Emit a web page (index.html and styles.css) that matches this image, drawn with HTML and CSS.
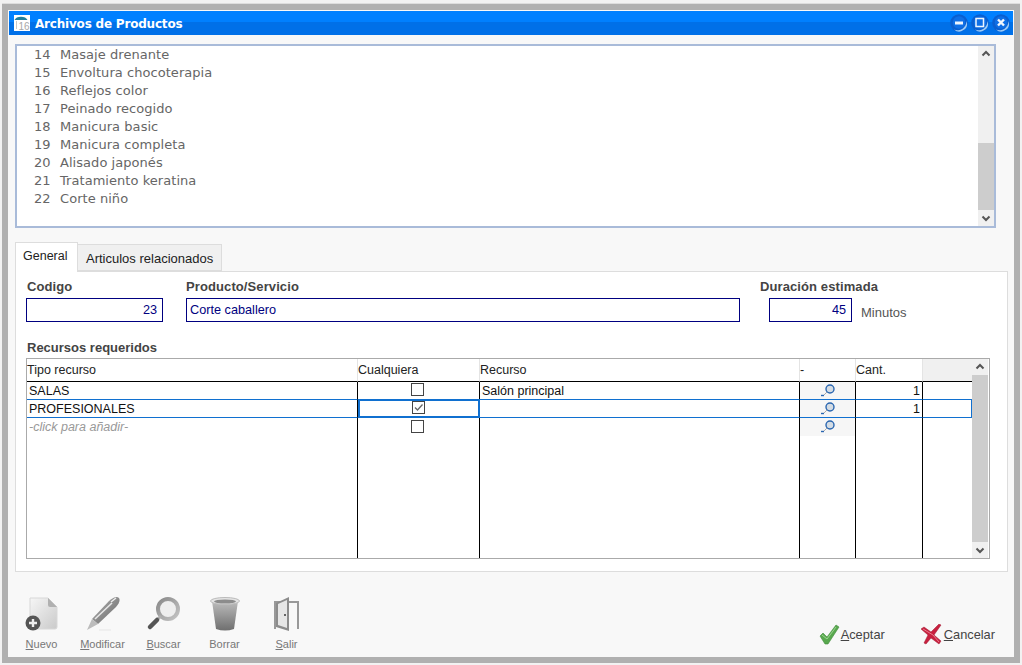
FILE: index.html
```html
<!DOCTYPE html>
<html lang="es">
<head>
    <meta charset="UTF-8">
    <title>Archivos de Productos</title>
    <link rel="stylesheet" href="styles.css">
</head>
<body>
    <div class="window">
        <div class="titlebar">
            <svg class="app-icon" width="16" height="16" viewBox="0 0 16 16">
                <rect width="16" height="16" fill="#fff"/>
                <path d="M0.5 5 C2 0.5 12 0.5 13.5 5 Z" fill="#1f7f9c"/>
                <path d="M2.5 6 V14" stroke="#c8c8c8" stroke-width="1"/>
                <text x="4.5" y="15" class="app-icon-text">16</text>
            </svg>
            <span class="title">Archivos de Productos</span>
            <div class="win-buttons">
                <svg width="18" height="18" viewBox="0 0 18 18">
                    <circle cx="9" cy="9" r="8.8" fill="#0a5fd0"/>
                    <path d="M16.5 7 A7.8 7.8 0 0 1 4 15.5 A9 9 0 0 0 16.5 7 Z" fill="#9ccbf7"/>
                    <circle cx="9" cy="8.5" r="6.2" fill="#0f6fe6"/>
                    <rect x="5" y="7.5" width="8" height="3" fill="#eef5fd"/>
                </svg>
                <svg width="18" height="18" viewBox="0 0 18 18">
                    <circle cx="9" cy="9" r="8.8" fill="#0a5fd0"/>
                    <path d="M16.5 7 A7.8 7.8 0 0 1 4 15.5 A9 9 0 0 0 16.5 7 Z" fill="#9ccbf7"/>
                    <circle cx="9" cy="8.5" r="6.2" fill="#0f6fe6"/>
                    <rect x="5" y="4.5" width="7.5" height="8" fill="none" stroke="#eef5fd" stroke-width="1.5"/>
                </svg>
                <svg width="18" height="18" viewBox="0 0 18 18">
                    <circle cx="9" cy="9" r="8.8" fill="#0a5fd0"/>
                    <path d="M16.5 7 A7.8 7.8 0 0 1 4 15.5 A9 9 0 0 0 16.5 7 Z" fill="#9ccbf7"/>
                    <circle cx="9" cy="8.5" r="6.2" fill="#0f6fe6"/>
                    <path d="M6 5.5 L12 11.5 M12 5.5 L6 11.5" stroke="#f2f7fd" stroke-width="2.4"/>
                </svg>
            </div>
        </div>

        <div class="content">
            <div class="listbox">
                <ul class="items">
                    <li><span class="num">14</span>Masaje drenante</li>
                    <li><span class="num">15</span>Envoltura chocoterapia</li>
                    <li><span class="num">16</span>Reflejos color</li>
                    <li><span class="num">17</span>Peinado recogido</li>
                    <li><span class="num">18</span>Manicura basic</li>
                    <li><span class="num">19</span>Manicura completa</li>
                    <li><span class="num">20</span>Alisado japonés</li>
                    <li><span class="num">21</span>Tratamiento keratina</li>
                    <li><span class="num">22</span>Corte niño</li>
                </ul>
                <div class="scrollbar">
                    <svg class="arrow" width="16" height="16" viewBox="0 0 16 16"><path d="M4.5 9.5 L8 6 L11.5 9.5" fill="none" stroke="#555" stroke-width="2"/></svg>
                    <div class="track list-track"><div class="thumb list-thumb"></div></div>
                    <svg class="arrow" width="16" height="16" viewBox="0 0 16 16"><path d="M4.5 6.5 L8 10 L11.5 6.5" fill="none" stroke="#555" stroke-width="2"/></svg>
                </div>
            </div>

            <div class="tabs">
                <div class="tab active">General</div>
                <div class="tab">Articulos relacionados</div>
            </div>

            <div class="panel">
                <div class="fields">
                    <div class="field codigo">
                        <label>Codigo</label>
                        <div class="input num-input">23</div>
                    </div>
                    <div class="field producto">
                        <label>Producto/Servicio</label>
                        <div class="input">Corte caballero</div>
                    </div>
                    <div class="field duracion">
                        <label>Duración estimada</label>
                        <div class="duracion-row">
                            <div class="input num-input">45</div>
                            <span class="minutos">Minutos</span>
                        </div>
                    </div>
                </div>

                <div class="grid-label">Recursos requeridos</div>
                <div class="grid">
                    <table class="recursos">
                        <colgroup>
                            <col class="c1"><col class="c2"><col class="c3"><col class="c4"><col class="c5"><col class="c6">
                        </colgroup>
                        <thead>
                            <tr>
                                <th>Tipo recurso</th>
                                <th>Cualquiera</th>
                                <th>Recurso</th>
                                <th>-</th>
                                <th>Cant.</th>
                                <th class="head-empty"></th>
                            </tr>
                        </thead>
                        <tbody>
                            <tr class="row-first">
                                <td class="text">SALAS</td>
                                <td class="center"><span class="check"></span></td>
                                <td class="text">Salón principal</td>
                                <td class="lookup"><svg width="16" height="14" viewBox="0 0 16 14"><use href="#lupa"/></svg></td>
                                <td class="qty">1</td>
                                <td></td>
                            </tr>
                            <tr class="row-selected">
                                <td class="text">PROFESIONALES</td>
                                <td class="center current"><span class="check"><svg width="11" height="11" viewBox="0 0 11 11"><path d="M2 5.5 L4.5 8 L9.5 2.5" fill="none" stroke="#666" stroke-width="1.3"/></svg></span></td>
                                <td class="text"></td>
                                <td class="lookup"><svg width="16" height="14" viewBox="0 0 16 14"><use href="#lupa"/></svg></td>
                                <td class="qty">1</td>
                                <td class="last"></td>
                            </tr>
                            <tr class="row-new">
                                <td class="hint">-click para añadir-</td>
                                <td class="center"><span class="check"></span></td>
                                <td></td>
                                <td class="lookup"><svg width="16" height="14" viewBox="0 0 16 14"><use href="#lupa"/></svg></td>
                                <td></td>
                                <td></td>
                            </tr>
                            <tr class="row-fill">
                                <td></td><td></td><td></td><td></td><td></td><td></td>
                            </tr>
                        </tbody>
                    </table>
                    <div class="scrollbar grid-scroll">
                        <svg class="arrow" width="16" height="16" viewBox="0 0 16 16"><path d="M4.5 9.5 L8 6 L11.5 9.5" fill="none" stroke="#555" stroke-width="2"/></svg>
                        <div class="track"><div class="thumb grid-thumb"></div></div>
                        <svg class="arrow" width="16" height="16" viewBox="0 0 16 16"><path d="M4.5 6.5 L8 10 L11.5 6.5" fill="none" stroke="#555" stroke-width="2"/></svg>
                    </div>
                </div>
            </div>

            <div class="footer">
                <div class="tools">
                    <div class="tool">
                        <svg width="36" height="36" viewBox="0 0 36 36">
                            <defs>
                                <linearGradient id="docg" x1="0" y1="0" x2="1" y2="1"><stop offset="0" stop-color="#f6f6f6"/><stop offset="1" stop-color="#cacaca"/></linearGradient>
                                <linearGradient id="bucketg" x1="0" y1="0" x2="0" y2="1"><stop offset="0" stop-color="#bdbdbd"/><stop offset="1" stop-color="#6f6f6f"/></linearGradient>
                                <linearGradient id="peng" x1="0" y1="0" x2="1" y2="1"><stop offset="0" stop-color="#b4b4b4"/><stop offset="1" stop-color="#666"/></linearGradient>
                                <linearGradient id="lensg" x1="0" y1="0" x2="1" y2="1"><stop offset="0" stop-color="#8a8a8a"/><stop offset="1" stop-color="#c4c4c4"/></linearGradient>
                            </defs>
                            <path d="M6 2 H24 L33 11 V31 Q33 33 31 33 H8 Q6 33 6 31 Z" fill="url(#docg)" stroke="#d8d8d8"/>
                            <path d="M24 2 L33 11 H26 Q24 11 24 9 Z" fill="#b0b0b0"/>
                            <circle cx="9" cy="27" r="7.5" fill="#555"/>
                            <path d="M9 23 V31 M5 27 H13" stroke="#eee" stroke-width="2.4"/>
                        </svg>
                        <span class="tool-label"><u>N</u>uevo</span>
                    </div>
                    <div class="tool">
                        <svg width="36" height="36" viewBox="0 0 36 36">
                            <path d="M24 5 Q31 -1 34 2 Q36 5 31 11 L13 28 L7 23 Z" fill="url(#peng)"/>
                            <path d="M26 6 L31 2" stroke="#eee" stroke-width="1.5"/>
                            <path d="M7 23 L13 28 L2 34 Z" fill="#bcbcbc"/>
                            <path d="M10 23 L27 7" stroke="#e8e8e8" stroke-width="1.6"/>
                            <path d="M14 34 H26" stroke="#e6e6e6" stroke-width="1"/>
                        </svg>
                        <span class="tool-label"><u>M</u>odificar</span>
                    </div>
                    <div class="tool">
                        <svg width="36" height="36" viewBox="0 0 36 36">
                            <circle cx="22" cy="13" r="10" fill="#eee" stroke="url(#lensg)" stroke-width="4"/>
                            <path d="M15 20 L11 24" stroke="#b0b0b0" stroke-width="3"/>
                            <path d="M11 24 L4 31" stroke="#555" stroke-width="4.5" stroke-linecap="round"/>
                        </svg>
                        <span class="tool-label"><u>B</u>uscar</span>
                    </div>
                    <div class="tool">
                        <svg width="36" height="36" viewBox="0 0 36 36">
                            <path d="M5 5 L9 33 Q18 36 27 33 L31 5 Z" fill="url(#bucketg)"/>
                            <ellipse cx="18" cy="5" rx="14.5" ry="3.5" fill="#e4e4e4" stroke="#bbb"/>
                            <ellipse cx="18" cy="5.5" rx="11" ry="2" fill="#8c8c8c"/>
                        </svg>
                        <span class="tool-label">Borrar</span>
                    </div>
                    <div class="tool">
                        <svg width="36" height="36" viewBox="0 0 36 36">
                            <path d="M5 33 V5 H30 V33 H28 V7 H7 V33 Z" fill="#999"/>
                            <path d="M7 7 L20 1 V35 L7 31 Z" fill="#8c8c8c"/>
                            <path d="M9 8 L18 4 V32 L9 29 Z" fill="#e6e6e6"/>
                            <rect x="15" y="18" width="2" height="2" fill="#666"/>
                        </svg>
                        <span class="tool-label"><u>S</u>alir</span>
                    </div>
                </div>
                <div class="actions">
                    <div class="action">
                        <svg width="21" height="21" viewBox="0 0 21 21">
                            <path d="M1 12 L4 9 L8 13 L17 1 L20 3 L9 20 L6 20 Z" fill="#58a84e" stroke="#3f8a3a" stroke-width="0.6"/>
                            <path d="M3 11 L8 15 L17 3" fill="none" stroke="#9ad48f" stroke-width="1"/>
                        </svg>
                        <span><u>A</u>ceptar</span>
                    </div>
                    <div class="action">
                        <svg width="22" height="21" viewBox="0 0 22 21">
                            <path d="M0 5 L3 3 L10 8 L18 0 L20 1 L13 11 L20 17 L18 20 L10 14 L5 20 L3 19 L7 11 Z" fill="#c8203f" stroke="#a01830" stroke-width="0.5"/>
                            <path d="M2 5 L12 11 L18 18" fill="none" stroke="#ea7c8c" stroke-width="1"/>
                        </svg>
                        <span><u>C</u>ancelar</span>
                    </div>
                </div>
            </div>
        </div>
    </div>

    <svg class="defs" width="0" height="0">
        <symbol id="lupa" viewBox="0 0 16 14">
            <circle cx="10" cy="6" r="4" fill="#d4dce4" stroke="#2a66b0" stroke-width="1.4"/>
            <path d="M1 12.5 L4 12.5" stroke="#2a66b0" stroke-width="1.4"/>
            <path d="M4 12 L7 9" stroke="#aaa" stroke-width="1"/>
        </symbol>
    </svg>
</body>
</html>
```

FILE: styles.css
```css
html, body {
    margin: 0;
    padding: 0;
    height: 100%;
    background-color: #f2f2f2;
    overflow: hidden;
}
body {
    font-family: "Liberation Sans", Arial, sans-serif;
    font-size: 12px;
}
.window {
    box-sizing: border-box;
    width: 1018px;
    height: 659px;
    margin: 4px 0 0 2px;
    border: 6px solid #b0b0b0;
    padding: 1px 1px 0 1px;
    background-color: #f8f8f8;
    display: flex;
    flex-direction: column;
    box-shadow: 0 -1px 0 #ddd;
}
.titlebar {
    height: 24px;
    flex: none;
    display: flex;
    align-items: center;
    padding-left: 5px;
    background: linear-gradient(#0080ff 0, #0080ff 45%, #0070e8 45%, #0070e8 100%);
    color: white;
}
.app-icon {
    margin-right: 5px;
}
.app-icon-text {
    font-family: "Liberation Sans", sans-serif;
    font-size: 10px;
    fill: #a8a8a8;
}
.title {
    font-family: "DejaVu Sans", Verdana, sans-serif;
    font-weight: bold;
    font-size: 12px;
    letter-spacing: -0.2px;
    padding-top: 1px;
}
.win-buttons {
    margin-left: auto;
    margin-right: 3px;
    display: flex;
    gap: 3px;
}
.content {
    flex: 1;
    display: flex;
    flex-direction: column;
    padding: 9px 0 0 6px;
}
.listbox {
    box-sizing: border-box;
    width: 981px;
    height: 184px;
    flex: none;
    border: 2px solid #a9bbd9;
    background-color: white;
    display: flex;
}
.items {
    flex: 1;
    list-style: none;
    margin: 0;
    padding: 0;
    font-family: "DejaVu Sans", Verdana, sans-serif;
    font-size: 13px;
    letter-spacing: 0.05px;
    color: #666;
}
.items li {
    height: 18px;
    line-height: 18px;
    display: flex;
}
.num {
    width: 26px;
    margin-left: 17px;
}
.scrollbar {
    width: 16px;
    flex: none;
    display: flex;
    flex-direction: column;
    background-color: #f0f0f0;
}
.arrow {
    flex: none;
    display: block;
}
.track {
    flex: 1;
    display: flex;
    flex-direction: column;
}
.thumb {
    background-color: #cdcdcd;
}
.list-track {
    padding-top: 81px;
}
.list-thumb {
    height: 67px;
}
.grid-thumb {
    flex: 1;
}
.tabs {
    display: flex;
    align-items: flex-end;
    height: 29px;
    margin-top: 14px;
    flex: none;
}
.tab {
    box-sizing: border-box;
    height: 27px;
    line-height: 27px;
    padding: 0 8px;
    width: 144px;
    background-color: #f0f0f0;
    border: 1px solid #ddd;
    border-left: none;
    color: #222;
    font-size: 13px;
    white-space: nowrap;
}
.tab.active {
    width: 63px;
    height: 30px;
    line-height: 26px;
    padding: 0 7px;
    font-size: 12.5px;
    background-color: white;
    border-left: 1px solid #ddd;
    border-bottom: none;
    margin-bottom: -1px;
    position: relative;
    z-index: 1;
}
.panel {
    box-sizing: border-box;
    width: 993px;
    height: 301px;
    flex: none;
    background-color: white;
    border: 1px solid #ddd;
    padding: 7px 17px 0 10px;
}
.fields {
    display: flex;
}
.field label {
    display: block;
    height: 16px;
    line-height: 16px;
    margin: 0 0 3px 1px;
    font-size: 13px;
    font-weight: bold;
    letter-spacing: 0.1px;
    color: #444;
}
.codigo {
    width: 137px;
}
.producto {
    width: 554px;
    margin-left: 23px;
}
.producto label {
    margin-left: 0;
}
.duracion {
    margin-left: 20px;
}
.duracion label {
    margin-left: 0;
}
.duracion-row {
    display: flex;
    align-items: center;
    padding-left: 9px;
}
.duracion-row .input {
    width: 83px;
}
.minutos {
    margin: 5px 0 0 9px;
    font-size: 13px;
    color: #555;
}
.input {
    box-sizing: border-box;
    height: 24px;
    line-height: 22px;
    padding: 0 3px;
    border: 1px solid #000080;
    font-size: 12.7px;
    color: #000080;
    background-color: white;
}
.num-input {
    text-align: right;
    padding-right: 5px;
}
.grid-label {
    height: 15px;
    line-height: 15px;
    margin: 18px 0 3px 1px;
    font-size: 13px;
    font-weight: bold;
    color: #444;
}
.grid {
    box-sizing: border-box;
    height: 201px;
    border: 1px solid #aaa;
    display: flex;
    padding-right: 1px;
}
.recursos {
    width: 945px;
    height: 199px;
    flex: none;
    table-layout: fixed;
    border-collapse: separate;
    border-spacing: 0;
    font-size: 12.5px;
}
.c1 { width: 331px; }
.c2 { width: 122px; }
.c3 { width: 320px; }
.c4 { width: 56px; }
.c5 { width: 67px; }
.c6 { width: 49px; }
.recursos th {
    box-sizing: border-box;
    height: 23px;
    padding: 0;
    font-weight: normal;
    text-align: left;
    color: #222;
    border-right: 1px solid #e4e4e4;
    border-bottom: 1px solid #000;
}
.recursos th.head-empty {
    background-color: #f0f0f0;
    border-right: none;
}
.recursos td {
    box-sizing: border-box;
    padding: 0;
    border-right: 1px solid #000;
    color: #111;
    vertical-align: middle;
}
.recursos td:last-child {
    border-right: none;
}
.row-first td {
    height: 17px;
}
.recursos .row-selected td {
    height: 19px;
    border-top: 1px solid #1070d0;
    border-bottom: 1px solid #1070d0;
}
.recursos .row-selected td.last {
    border-right: 1px solid #1070d0;
}
.recursos .row-selected td.current {
    border: 2px solid #1070d0;
}
.row-new td {
    height: 18px;
}
.recursos td.text, .recursos td.hint {
    padding-left: 2px;
}
.recursos td.hint {
    font-style: italic;
    color: #999;
}
.recursos td.center {
    text-align: center;
    padding-right: 2px;
}
.check {
    display: inline-block;
    box-sizing: border-box;
    width: 13px;
    height: 13px;
    margin-bottom: 2px;
    border: 1px solid #444;
    background-color: white;
    vertical-align: middle;
}
.check svg {
    display: block;
}
.lookup {
    background-color: #f6f6f6;
    text-align: center;
}
.lookup svg {
    display: inline-block;
    margin-bottom: 2px;
    vertical-align: middle;
}
.recursos td.qty {
    text-align: right;
    padding-right: 2px;
}
.grid-scroll {
    width: 16px;
}
.footer {
    flex: 1;
    display: flex;
    justify-content: space-between;
    padding: 24px 18px 0 0;
}
.tools {
    display: flex;
    margin-left: -4px;
}
.tool {
    width: 61px;
    display: flex;
    flex-direction: column;
    align-items: center;
}
.tool:last-child {
    margin-left: 1px;
}
.tool svg {
    display: block;
}
.tool-label {
    margin-top: 5px;
    font-size: 11px;
    line-height: 14px;
    color: #777;
}
.actions {
    display: flex;
    gap: 36px;
    margin-top: 28px;
    align-items: flex-start;
}
.action {
    display: flex;
    align-items: center;
    gap: 1px;
    font-size: 12.8px;
    color: #444;
    height: 21px;
}
.defs {
    position: absolute;
}
```
